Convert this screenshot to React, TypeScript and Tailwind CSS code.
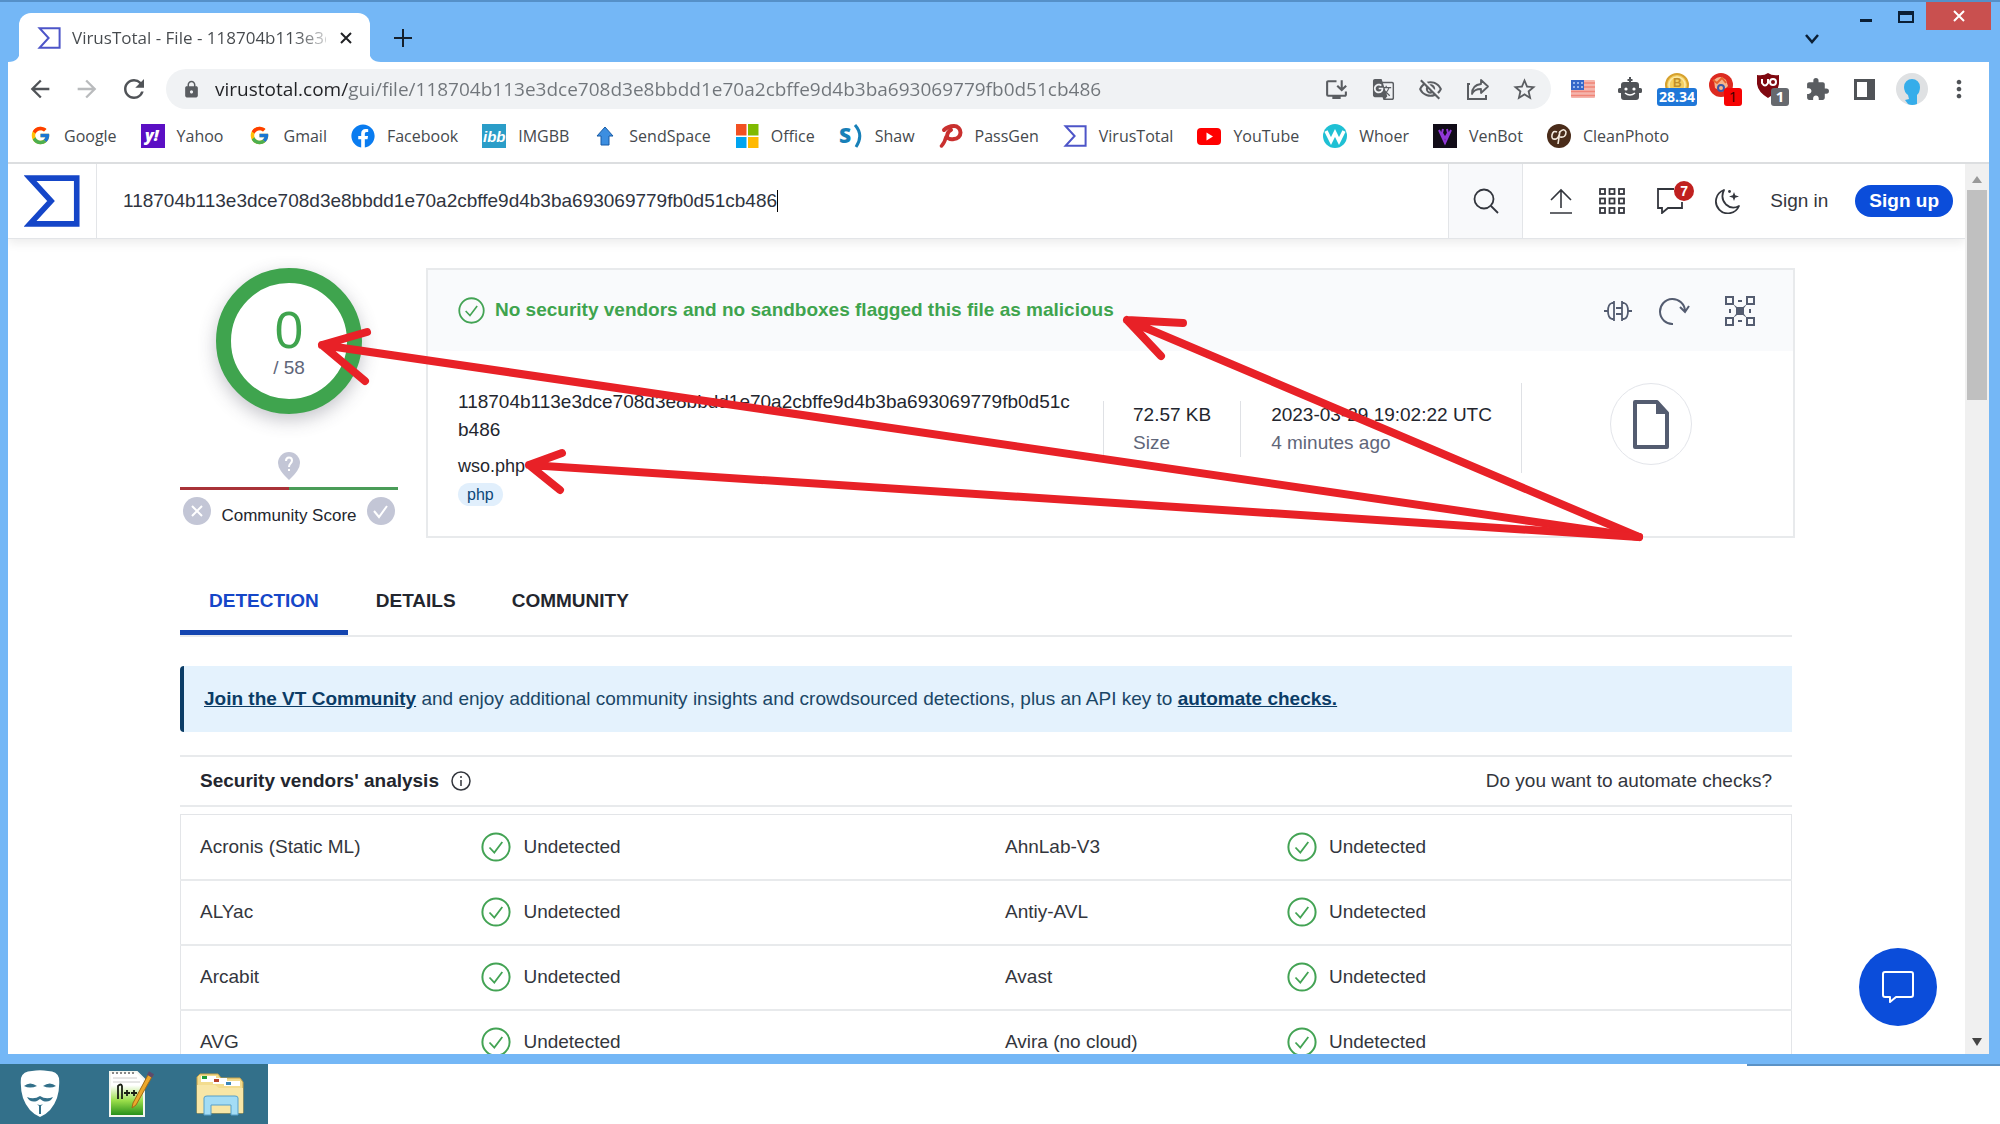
import React from 'react';
import { FcGoogle } from 'react-icons/fc';
import { FaFacebook } from 'react-icons/fa';
import {
  MdArrowBack,
  MdArrowForward,
  MdExtension,
  MdGTranslate,
  MdLock,
  MdMoreVert,
  MdOutlineInstallDesktop,
  MdOutlineVisibilityOff,
  MdRefresh,
  MdStarBorder,
} from 'react-icons/md';

const HASH = '118704b113e3dce708d3e8bbdd1e70a2cbffe9d4b3ba693069779fb0d51cb486';

const vendorRows = [
  ['Acronis (Static ML)', 'AhnLab-V3'],
  ['ALYac', 'Antiy-AVL'],
  ['Arcabit', 'Avast'],
  ['AVG', 'Avira (no cloud)'],
];

const SigmaLogo: React.FC<{ className: string; stroke?: number }> = ({ className, stroke = 2 }) => (
  <svg viewBox="0 0 24 22" className={className} fill="none" stroke="currentColor" strokeWidth={stroke}>
    <path d="M2.6 1.2H22.6V20.8H2.6L11.6 11z" strokeMiterlimit="10" />
  </svg>
);

const CheckCircle: React.FC<{ className: string }> = ({ className }) => (
  <svg viewBox="0 0 30 30" className={className} fill="none" stroke="#43a354" strokeWidth="2">
    <circle cx="15" cy="15" r="13.6" />
    <path d="M8.5 15.5l4.8 5 8-10.5" strokeWidth="1.8" />
  </svg>
);

const bookmarks: { label: string; icon: React.ReactNode }[] = [
  { label: 'Google', icon: <FcGoogle size={21} /> },
  {
    label: 'Yahoo',
    icon: (
      <svg viewBox="0 0 24 24" className="size-6">
        <rect width="24" height="24" fill="#5b0fc4" />
        <text x="4" y="17" fontSize="16" fontWeight="800" fontStyle="italic" fill="#fff" fontFamily="Open Sans, sans-serif">y!</text>
      </svg>
    ),
  },
  { label: 'Gmail', icon: <FcGoogle size={21} /> },
  { label: 'Facebook', icon: <FaFacebook size={24} color="#0a7cf0" /> },
  {
    label: 'IMGBB',
    icon: (
      <svg viewBox="0 0 24 24" className="size-6">
        <rect width="24" height="24" fill="#2a9dc8" />
        <text x="1" y="18" fontSize="15" fontWeight="700" fontStyle="italic" fill="#fff" fontFamily="Liberation Sans, sans-serif">ibb</text>
      </svg>
    ),
  },
  {
    label: 'SendSpace',
    icon: (
      <svg viewBox="0 0 24 24" className="size-6">
        <path d="M12 3l8 9h-4v9H8v-9H4z" fill="#3c8ee0" stroke="#175ba6" />
      </svg>
    ),
  },
  {
    label: 'Office',
    icon: (
      <svg viewBox="0 0 24 24" className="size-6">
        <path d="M1 0h10.500v11.500H1z" fill="#f25022" />
        <path d="M13 0h10.500v11.500H13z" fill="#7fba00" />
        <path d="M1 13h10.500v11H1z" fill="#00a4ef" />
        <path d="M13 13h10.500v11H13z" fill="#ffb900" />
      </svg>
    ),
  },
  {
    label: 'Shaw',
    icon: (
      <svg viewBox="0 0 24 24" className="size-6">
        <text x="0" y="19" fontSize="21" fontWeight="800" fill="#1780b8" fontFamily="Open Sans, sans-serif">S</text>
        <path d="M16 1q9 10 1 22" fill="none" stroke="#1780b8" strokeWidth="3" />
      </svg>
    ),
  },
  {
    label: 'PassGen',
    icon: (
      <svg viewBox="0 0 24 24" className="size-6" fill="none" stroke="#c9302f" strokeLinecap="round">
        <path d="M2.500 22q3-3 4.500-9" strokeWidth="3.500" />
        <path d="M5 6q4-4 10-4a6.500 6.500 0 010 13q-5 1-7-2 0-5 4-7" strokeWidth="4" />
      </svg>
    ),
  },
  { label: 'VirusTotal', icon: <SigmaLogo className="h-6 w-6 text-[#4d55c8]" /> },
  {
    label: 'YouTube',
    icon: (
      <svg viewBox="0 0 24 24" className="size-6">
        <rect x="0" y="4" width="24" height="17" rx="4" fill="#f00" />
        <path d="M9.500 8.500l6.500 4-6.500 4z" fill="#fff" />
      </svg>
    ),
  },
  {
    label: 'Whoer',
    icon: (
      <svg viewBox="0 0 24 24" className="size-6">
        <circle cx="12" cy="12" r="12" fill="#1fc0d4" />
        <path d="M3 7l5 10 4-8 4 8 5-10" fill="none" stroke="#fff" strokeWidth="3.500" />
      </svg>
    ),
  },
  {
    label: 'VenBot',
    icon: (
      <svg viewBox="0 0 24 24" className="size-6">
        <rect width="24" height="24" fill="#110c18" />
        <path d="M6 6l6 13 6-13M10 5l-1 4 3 5 3-5-1-4" fill="none" stroke="#9238d8" strokeWidth="2" />
      </svg>
    ),
  },
  {
    label: 'CleanPhoto',
    icon: (
      <svg viewBox="0 0 24 24" className="size-6">
        <circle cx="12" cy="12" r="12" fill="#4a2c1a" />
        <path d="M10 8q-4-2-5 3t4 4q3-1 4-8l-2 13M12 9q5-6 7-1 0 6-6 5" fill="none" stroke="#f3e8dc" strokeWidth="1.600" />
      </svg>
    ),
  },
];

const extensions: { label: string; icon: React.ReactNode }[] = [
  {
    label: 'Proxy',
    icon: (
      <svg viewBox="0 0 24 18" className="h-[18px] w-6">
        <rect width="24" height="18" rx="1" fill="#f5b5ac" />
        <path d="M12 3h12M12 7h12M0 11.500h24M0 15.500h24" stroke="#f08577" strokeWidth="1.500" />
        <rect width="13" height="10" fill="#3567c9" />
        <path d="M2 3h10M2 7h10" stroke="#b9d0f5" strokeWidth="1.500" strokeDasharray="2 2" />
      </svg>
    ),
  },
  {
    label: 'Robot',
    icon: (
      <svg viewBox="0 0 24 24" className="size-6 text-[#505357]" fill="currentColor">
        <path d="M11 0h2v5h-2z" />
        <path d="M9.500 2h5v2h-5z" />
        <path d="M6 5h12a3 3 0 013 3v3h1.500a1.500 1.500 0 011.500 1.500v2a1.500 1.500 0 01-1.500 1.500H21v4a3 3 0 01-3 3H6a3 3 0 01-3-3v-4H1.500A1.500 1.500 0 010 14.500v-2A1.500 1.500 0 011.500 11H3V8a3 3 0 013-3z" />
        <circle cx="8" cy="12" r="1.600" fill="#fff" />
        <circle cx="16" cy="12" r="1.600" fill="#fff" />
        <path d="M7 16q5 4 10 0" fill="none" stroke="#fff" strokeWidth="1.500" />
      </svg>
    ),
  },
  {
    label: 'Bitcoin price',
    icon: (
      <svg viewBox="0 0 42 34" className="h-[34px] w-[42px]">
        <circle cx="21" cy="13" r="11" fill="#f4cf62" stroke="#d6a12e" strokeWidth="2" />
        <circle cx="21" cy="13" r="8" fill="none" stroke="#fbeaa8" strokeWidth="1.500" />
        <text x="17" y="15" fontSize="12" fontWeight="700" fill="#c08f2a" fontFamily="Liberation Sans, sans-serif">B</text>
        <rect x="1" y="16" width="40" height="18" rx="3" fill="#1f77d8" />
        <text x="21" y="30" fontSize="14" fontWeight="700" textAnchor="middle" fill="#fff" fontFamily="Open Sans, sans-serif">28.34</text>
      </svg>
    ),
  },
  {
    label: 'Cookies',
    icon: (
      <svg viewBox="0 0 36 34" className="h-[34px] w-9">
        <circle cx="15" cy="13" r="12" fill="#dc2a20" />
        <path d="M8 8q6-6 12 0l2 6-6 6-7-4z" fill="#f6b48c" />
        <path d="M7 8l4 3 5-5 4 5" fill="none" stroke="#e8632c" strokeWidth="2" />
        <circle cx="15" cy="16" r="3" fill="none" stroke="#3b57a8" strokeWidth="2" />
        <rect x="18" y="16" width="18" height="18" rx="3" fill="#f60404" />
        <text x="27" y="30" fontSize="15" textAnchor="middle" fill="#3d0000" fontFamily="Open Sans, sans-serif">1</text>
      </svg>
    ),
  },
  {
    label: 'uBlock',
    icon: (
      <svg viewBox="0 0 36 34" className="h-[34px] w-9">
        <path d="M4 3q7 1 11-2 4 3 11 2v9q-1 8-11 14Q5 20 4 12z" fill="#7f0810" />
        <path d="M9 7v4q3 5 6 0V7M17 10a3 3 0 106 0 3 3 0 10-6 0" fill="none" stroke="#fff" strokeWidth="2" />
        <rect x="18" y="16" width="18" height="18" rx="3" fill="#66696e" />
        <text x="27" y="30" fontSize="15" fontWeight="700" textAnchor="middle" fill="#fff" fontFamily="Open Sans, sans-serif">1</text>
      </svg>
    ),
  },
  { label: 'Extensions', icon: <MdExtension size={25} color="#5a5d61" /> },
  {
    label: 'Side panel',
    icon: (
      <svg viewBox="0 0 21 21" className="size-[21px]">
        <rect x="1.500" y="1.500" width="18" height="18" fill="#fff" stroke="#505357" strokeWidth="3" />
        <path d="M13 1h7v19h-7z" fill="#505357" />
      </svg>
    ),
  },
  {
    label: 'Profile',
    icon: (
      <svg viewBox="0 0 32 32" className="size-8">
        <circle cx="16" cy="16" r="16" fill="#dfe1e3" />
        <path d="M8 14a8 8 0 0116 0q0 5-3 8v9q-5 2-9 0l-3-4 4-1-1-4q-4-3-4-8z" fill="#35adea" />
      </svg>
    ),
  },
  { label: 'Menu', icon: <MdMoreVert size={28} color="#505357" /> },
];

const ShareIcon = () => (
  <svg viewBox="0 0 24 24" className="size-6" fill="none" stroke="currentColor" strokeWidth="2">
    <path d="M4 7H2v15h18v-4" />
    <path d="M15 3l7 6.500-7 6.500v-4q-7 0-9 5 0-9 9-10z" strokeLinejoin="round" strokeWidth="1.800" />
  </svg>
);

const TitleBar = () => (
  <div className="flex h-[62px] border-t-2 border-[#5590c8] bg-[#74b7f6] pl-[19px]">
    <div className="relative mt-[11px] flex w-[351px] items-center rounded-t-xl bg-white pl-[18px] pr-3">
      <svg viewBox="0 0 12 12" className="absolute -left-[11px] bottom-0 size-3"><path d="M12 0v12H0Q12 12 12 0z" fill="#fff" /></svg>
      <svg viewBox="0 0 12 12" className="absolute -right-[11px] bottom-0 size-3"><path d="M0 0v12h12Q0 12 0 0z" fill="#fff" /></svg>
      <SigmaLogo className="h-6 w-6 shrink-0 text-[#4d55c8]" />
      <span className="ml-[11px] flex-1 overflow-hidden whitespace-nowrap bg-[linear-gradient(to_right,#45494d_88%,#ffffff_104%)] bg-clip-text text-[17px] text-transparent">
        VirusTotal - File - 118704b113e3dc
      </span>
      <button aria-label="Close tab" className="ml-2 grid size-6 place-items-center text-[#202124]">
        <svg viewBox="0 0 12 12" className="size-3" stroke="currentColor" strokeWidth="2"><path d="M1 1l10 10M11 1L1 11" /></svg>
      </button>
    </div>
    <button aria-label="New tab" className="ml-6 mt-[27px] size-[18px] text-[#15202c]">
      <svg viewBox="0 0 18 18" className="size-[18px]" stroke="currentColor" strokeWidth="2"><path d="M9 0v18M0 9h18" /></svg>
    </button>
    <button aria-label="Search tabs" className="ml-auto mr-10 mt-[28px] size-4 text-[#0b1f35]">
      <svg viewBox="0 0 16 16" className="size-4" fill="none" stroke="currentColor" strokeWidth="2.500"><path d="M2 5l6 7 6-7" /></svg>
    </button>
    <button aria-label="Minimize" className="mt-[17px] h-[3px] w-3 bg-[#0b1f35]" />
    <button aria-label="Maximize" className="ml-[26px] mt-[9px] h-3 w-4 border-2 border-t-4 border-[#0b1f35]" />
    <button aria-label="Close" className="ml-3 mr-[9px] grid h-7 w-[65px] place-items-center bg-[#c9504f] text-white">
      <svg viewBox="0 0 12 12" className="size-3" stroke="currentColor" strokeWidth="2"><path d="M1 1l10 10M11 1L1 11" /></svg>
    </button>
  </div>
);

const Toolbar = () => (
  <div className="flex items-center pl-2 pr-[7px] pt-[7px]">
    {[
      { label: 'Back', icon: <MdArrowBack size={28} />, color: 'text-[#505357]' },
      { label: 'Forward', icon: <MdArrowForward size={28} />, color: 'text-[#b9bbbd]' },
      { label: 'Reload', icon: <MdRefresh size={30} />, color: 'text-[#505357]' },
    ].map(b => (
      <button key={b.label} aria-label={b.label} className={`grid w-[47px] place-items-center ${b.color}`}>{b.icon}</button>
    ))}
    <div className="ml-[9px] flex h-10 flex-1 items-center rounded-full bg-[#f0f2f4] pl-4 pr-[3px] text-[#5a5d61]">
      <MdLock size={19} />
      <input
        aria-label="Address"
        defaultValue={`virustotal.com/gui/file/${HASH}`}
        className="ml-[14px] min-w-0 flex-1 bg-[linear-gradient(to_right,#202124_133px,#70757a_133px)] bg-clip-text text-[19px] text-transparent outline-none"
      />
      {[
        { label: 'Install', icon: <MdOutlineInstallDesktop size={25} /> },
        { label: 'Translate', icon: <MdGTranslate size={23} /> },
        { label: 'Cookies blocked', icon: <MdOutlineVisibilityOff size={25} /> },
        { label: 'Share', icon: <ShareIcon /> },
        { label: 'Bookmark', icon: <MdStarBorder size={27} /> },
      ].map(b => (
        <button key={b.label} aria-label={b.label} className="grid w-[47px] place-items-center">{b.icon}</button>
      ))}
    </div>
    <div className="ml-2 flex">
      {extensions.map(e => (
        <button key={e.label} aria-label={e.label} className="grid h-10 w-[47px] place-items-center">{e.icon}</button>
      ))}
    </div>
  </div>
);

const BookmarksBar = () => (
  <nav className="flex h-[55px] items-center gap-6 border-b-2 border-[#dcdee0] pl-5 text-[16px] text-[#45494d]">
    {bookmarks.map(b => (
      <a key={b.label} href="#" className="flex items-center gap-3 whitespace-nowrap">
        <span className="grid size-6 place-items-center">{b.icon}</span>
        {b.label}
      </a>
    ))}
  </nav>
);

const SiteHeader = () => (
  <header className="relative z-10 flex h-[75px] items-stretch border-b border-[#e3e5e8] bg-white shadow-[0_4px_10px_rgba(0,0,0,0.08)]">
    <a href="#" aria-label="Home" className="flex w-[89px] items-center border-r border-[#e3e5e8] pl-4 text-[#1546c8]">
      <SigmaLogo className="h-[52px] w-[56px]" stroke={2.400} />
    </a>
    <div className="flex flex-1 items-center pl-[26px]">
      <input
        aria-label="Search"
        defaultValue={HASH}
        className="text-[19px] text-[#2f3440] outline-none [field-sizing:content]"
      />
      <span className="h-[22px] w-px bg-black" />
    </div>
    <button aria-label="Run search" className="grid w-[75px] place-items-center border-x border-[#e3e5e8] bg-[#f8f9fb] text-[#33363d]">
      <svg viewBox="0 0 26 26" className="size-[26px]" fill="none" stroke="currentColor" strokeWidth="1.800">
        <circle cx="11" cy="11" r="9.500" />
        <path d="M18 18l7 7" />
      </svg>
    </button>
    <div className="flex items-center pl-[26px] pr-3 text-[#33363d]">
      <button aria-label="Upload">
        <svg viewBox="0 0 24 26" className="h-[26px] w-6" fill="none" stroke="currentColor" strokeWidth="1.600">
          <path d="M12 20V2M2 12L12 2l10 10M1 25h22" />
        </svg>
      </button>
      <button aria-label="Apps" className="ml-[26px]">
        <svg viewBox="0 0 26 26" className="size-[26px]" fill="none" stroke="currentColor" strokeWidth="1.800">
          {[1, 10.500, 20].map(y => [1, 10.500, 20].map(x => <rect key={`${x}-${y}`} x={x} y={y} width="5" height="5" />))}
        </svg>
      </button>
      <button aria-label="Notifications" className="relative ml-[32px]">
        <svg viewBox="0 0 26 26" className="size-[26px]" fill="none" stroke="currentColor" strokeWidth="1.800">
          <path d="M17 1H1v19h4v5l6-5h14v-6" />
        </svg>
        <span className="absolute -top-[7px] left-[17px] grid size-5 place-items-center rounded-full bg-[#c0201f] text-[14px] font-bold leading-none text-white">7</span>
      </button>
      <button aria-label="Theme" className="ml-[31px]">
        <svg viewBox="0 0 26 26" className="size-[26px]" fill="none" stroke="currentColor" strokeWidth="1.800" strokeLinejoin="round">
          <path d="M10 2A12 12 0 1025 18Q18 22 12 16.500 6 10 10 2z" />
          <path d="M20 4l1.200 3.300L25 8.500l-3.800 1.200L20 13l-1.200-3.300L15 8.500l3.800-1.200z" fill="currentColor" stroke="none" />
          <circle cx="15.500" cy="3.500" r="1.400" fill="currentColor" stroke="none" />
        </svg>
      </button>
      <a href="#" className="ml-[30px] text-[19px]">Sign in</a>
      <a href="#" className="ml-[27px] rounded-full bg-[#0b4dda] px-[14px] py-[2px] text-[19px] font-bold text-white">Sign up</a>
    </div>
  </header>
);

const ScorePanel = () => (
  <div className="flex w-[218px] shrink-0 flex-col items-center">
    <div className="flex size-[146px] flex-col items-center justify-center rounded-full border-[15px] border-[#3fa44e] bg-white pt-1 shadow-[0_6px_18px_rgba(60,60,80,0.3)]">
      <span className="text-[51px] leading-[50px] text-[#3fa44e]">0</span>
      <span className="text-[19px] leading-6 text-[#5f6679]">/ 58</span>
    </div>
    <svg viewBox="0 0 22 28" className="mt-[38px] h-7 w-[22px]">
      <path d="M11 28Q0 18 0 11a11 11 0 0122 0q0 7-11 17z" fill="#c3c6d6" />
      <path d="M8 9q0-3.500 3-3.500t3 3q0 1.500-1.500 3T11 15M11 17v2" fill="none" stroke="#fff" strokeWidth="2" />
    </svg>
    <div className="mt-[7px] flex h-[3px] w-full">
      <div className="flex-1 bg-[#a83238]" />
      <div className="flex-1 bg-[#4a9c58]" />
    </div>
    <div className="mt-[7px] flex w-full items-start justify-between px-[3px]">
      <button aria-label="Harmful">
        <svg viewBox="0 0 28 28" className="size-7">
          <circle cx="14" cy="14" r="14" fill="#c3c6d6" />
          <path d="M9 9l10 10M19 9L9 19" stroke="#fff" strokeWidth="2" />
        </svg>
      </button>
      <span className="mt-[7px] text-[17px] leading-6 text-[#23262e]">Community Score</span>
      <button aria-label="Harmless">
        <svg viewBox="0 0 28 28" className="size-7">
          <circle cx="14" cy="14" r="14" fill="#c3c6d6" />
          <path d="M7 14l5 6 8-11" fill="none" stroke="#fff" strokeWidth="2" />
        </svg>
      </button>
    </div>
  </div>
);

const FileCard = () => (
  <div className="flex-1 border-2 border-[#e8eaec]">
    <div className="flex h-[81px] items-center bg-[#f9fafc] pl-[30px] pr-[38px] text-[#545c70]">
      <CheckCircle className="size-[27px]" />
      <h1 className="ml-[10px] text-[19px] font-bold text-[#3fa44e]">
        No security vendors and no sandboxes flagged this file as malicious
      </h1>
      <button aria-label="Similar files" className="ml-auto">
        <svg viewBox="0 0 30 24" className="h-6 w-[30px]" fill="none" stroke="currentColor" strokeWidth="1.800">
          <path d="M1 12h4M11 2v20M11 4H9q-4 1-4 8t4 8h2M19 2v20M19 4h2q4 1 4 8t-4 8h-2M25 12h4M13 9h6M13 15h6" />
        </svg>
      </button>
      <button aria-label="Reanalyze" className="ml-[26px]">
        <svg viewBox="0 0 32 28" className="h-7 w-8" fill="none" stroke="currentColor" strokeWidth="2">
          <path d="M14 27A12.500 12.500 0 1126 14M21 10l5 5 4-6" />
        </svg>
      </button>
      <button aria-label="Graph" className="ml-[34px]">
        <svg viewBox="0 0 30 30" className="size-[30px]" fill="none" stroke="currentColor" strokeWidth="2">
          <rect x="1" y="1" width="7" height="7" />
          <rect x="22" y="1" width="7" height="7" />
          <rect x="1" y="22" width="7" height="7" />
          <rect x="22" y="22" width="7" height="7" />
          <path d="M13 5h4M13 25h4M5 13v4M25 13v4" />
          <path d="M8 8l4 3h6l4-3-3 4v6l3 4-4-3h-6l-4 3 3-4v-6z" fill="currentColor" stroke="none" />
        </svg>
      </button>
    </div>
    <div className="flex h-[185px] items-start pl-[30px] pr-[101px] pt-8 text-[19px] leading-7 text-[#23262e]">
      <div className="w-[620px] pt-[5px]">
        <p className="break-all">{HASH}</p>
        <p className="mt-2 text-[18px] leading-7">wso.php</p>
        <a href="#" className="inline-block rounded-full bg-[#e1effc] px-[9px] text-[16px] leading-[23px] text-[#0b4779]">php</a>
      </div>
      <div className="ml-[25px] mt-[18px] border-l border-[#dfe1e5] pl-[29px]">
        <p>72.57 KB</p>
        <p className="text-[#5f6679]">Size</p>
      </div>
      <div className="ml-[29px] mt-[18px] border-l border-[#dfe1e5] pl-[30px]">
        <p>2023-03-29 19:02:22 UTC</p>
        <p className="text-[#5f6679]">4 minutes ago</p>
      </div>
      <div className="ml-[29px] h-[90px] w-px bg-[#dfe1e5]" />
      <div className="ml-auto grid size-[82px] place-items-center rounded-full border border-[#e3e5ea]">
        <svg viewBox="0 0 36 49" className="h-[49px] w-9">
          <path d="M2 2h22l10 11v34H2z" fill="#fff" stroke="#545c70" strokeWidth="4" strokeLinejoin="round" />
          <path d="M23 2l11 12H23z" fill="#545c70" />
        </svg>
      </div>
    </div>
  </div>
);

const VendorTable = () => (
  <table className="mt-[7px] w-full table-fixed border border-[#e3e5e8] text-[19px] text-[#33363d]">
    <tbody>
      {vendorRows.map(row => (
        <tr key={row[0]} className="h-[65px] border-b-2 border-[#e8eaec]">
          {row.map(name => (
            <React.Fragment key={name}>
              <td className="w-[17.5%] whitespace-nowrap pl-[19px]">{name}</td>
              <td className="w-[32.5%] pl-[19px]">
                <span className="flex items-center gap-3">
                  <CheckCircle className="size-[30px]" />
                  Undetected
                </span>
              </td>
            </React.Fragment>
          ))}
        </tr>
      ))}
    </tbody>
  </table>
);

// Hand drawn arrows that start from one point below the file icon
const Arrows = () => (
  <svg
    viewBox="0 1 1957 890"
    className="pointer-events-none absolute left-0 top-0 h-[890px] w-[1957px]"
    fill="none"
    stroke="#e82127"
    strokeWidth="8"
    strokeLinecap="round"
    strokeLinejoin="round"
  >
    <path d="M1631 374L1119 157M1175 160L1119 157L1153 193" />
    <path d="M1631 374L314 182M359 169L314 182L357 218" />
    <path d="M1631 374L521 302M554 290L521 302L552 327" />
  </svg>
);

const Taskbar = () => (
  <footer className="flex h-[60px] justify-between">
    <div className="flex w-[268px] items-center bg-[#33708a] pl-5">
      <button aria-label="Mask">
        <svg viewBox="0 0 40 48" className="h-12 w-10">
          <path d="M1 8Q3 1 12 1q8-1.500 16 0 9 0 11 7 1 10-2 20-5 14-17 19Q8 42 3 28 0 18 1 8z" fill="#fff" />
          <path d="M4 16q6-5 13 0-7 3-13 0zM23 16q7-5 13 0-6 3-13 0zM7 27q7 3 13-1 6 4 13 1-3 6-10 4l-3-2-3 2q-7 2-10-4zM17 34q3 2 6 0l-2 2v8h-2v-8z" fill="#33708a" />
        </svg>
      </button>
      <button aria-label="Notepad++" className="ml-[49px]">
        <svg viewBox="0 0 46 48" className="h-12 w-[46px]">
          <defs>
            <linearGradient id="note" x1="0" y1="0" x2="0" y2="1">
              <stop offset="0.3" stopColor="#fff" />
              <stop offset="0.65" stopColor="#9ade4a" />
              <stop offset="1" stopColor="#1f8a17" />
            </linearGradient>
          </defs>
          <path d="M1 2h27l7 7v37H1z" fill="url(#note)" stroke="#f4f6f0" strokeWidth="2" />
          <path d="M3 3h22" stroke="#888" strokeWidth="2" strokeDasharray="2 2" />
          <path d="M4 8h24M4 12h27" stroke="#ccc" />
          <path d="M9 29V16q3-3 4 0v13M15 23h6M18 20v6M22 23h6M25 20v6" fill="none" stroke="#1a1f14" strokeWidth="1.800" />
          <path d="M40 3l4 2-17 30-4 3 1-5z" fill="#eca82c" stroke="#a56a14" />
          <path d="M39 3l5 3" stroke="#5d4a6b" strokeWidth="4" />
        </svg>
      </button>
      <button aria-label="Files" className="ml-10">
        <svg viewBox="0 0 50 44" className="h-11 w-[50px]">
          <path d="M2 5l3-3h18l3 4h19l3 4v31H2z" fill="#f3dc8e" stroke="#c8a248" />
          <path d="M6 4h15v6H6zM18 6h14v6H18zM29 9h16v5H29z" fill="#fff" />
          <path d="M7 4h5v3H7z" fill="#1f9c3a" />
          <path d="M19 7h5v3h-5z" fill="#b8432c" />
          <path d="M31 10h5v3h-5z" fill="#3a86b8" />
          <path d="M2 13h18l4 3h24v25H2z" fill="#f8e6a6" />
          <path d="M9 43V26q0-2 3-2h28q3 0 3 2v17h-7V33H16v10z" fill="#a3dcf5" stroke="#579fc9" />
        </svg>
      </button>
    </div>
    <div className="w-[253px] border-t-2 border-[#5b92c6]" />
  </footer>
);

export default function App() {
  return (
    <div className="flex h-screen flex-col overflow-hidden bg-white font-['Open_Sans',sans-serif]">
      <TitleBar />
      <div className="flex min-h-0 flex-1 flex-col border-b-[10px] border-l-8 border-r-[11px] border-[#74b7f6] bg-white">
        <Toolbar />
        <BookmarksBar />
        <div className="flex min-h-0 flex-1 font-['Liberation_Sans',Arial,sans-serif]">
          <div className="relative flex-1 overflow-hidden">
            <SiteHeader />
            <main className="pl-[172px] pr-[170px] pt-[29px]">
              <section className="flex gap-7">
                <ScorePanel />
                <FileCard />
              </section>
              <section className="mr-[3px]">
                <div role="tablist" className="mt-[34px] flex border-b-2 border-[#e8eaec] text-[19px] font-semibold">
                  <button role="tab" aria-selected="true" className="h-[63px] border-b-[5px] border-[#1445b0] px-[29px] text-[#1546c8]">DETECTION</button>
                  <button role="tab" className="px-7 pb-[5px] text-[#23262e]">DETAILS</button>
                  <button role="tab" className="px-7 pb-[5px] text-[#23262e]">COMMUNITY</button>
                </div>
                <p className="mt-[29px] rounded-l border-l-4 border-[#0b3c66] bg-[#e4f2fd] py-5 pl-5 text-[19px] leading-[26px] text-[#1a4666]">
                  <a href="#" className="font-bold text-[#0b3c66] underline">Join the VT Community</a> and enjoy additional community insights and crowdsourced detections, plus an API key to{' '}
                  <a href="#" className="font-bold text-[#0b3c66] underline">automate checks.</a>
                </p>
                <div className="mt-[23px] flex h-[52px] items-center border-y-2 border-[#e8eaec] px-5 text-[19px] text-[#33363d]">
                  <h2 className="font-bold text-[#23262e]">Security vendors&#39; analysis</h2>
                  <svg viewBox="0 0 20 20" className="ml-3 size-5" fill="none" stroke="currentColor" strokeWidth="1.500">
                    <circle cx="10" cy="10" r="9" />
                    <path d="M10 9v6M10 5v2" />
                  </svg>
                  <a href="#" className="ml-auto">Do you want to automate checks?</a>
                </div>
                <VendorTable />
              </section>
            </main>
            <Arrows />
            <button aria-label="Chat" className="absolute bottom-7 right-7 grid size-[78px] place-items-center rounded-full bg-[#0b4dda]">
              <svg viewBox="0 0 32 32" className="size-8" fill="none" stroke="#fff" strokeWidth="2" strokeLinejoin="round">
                <path d="M3 1h26q2 0 2 2v21q0 2-2 2H14l-6 5v-5H3q-2 0-2-2V3q0-2 2-2z" />
              </svg>
            </button>
          </div>
          <div className="flex w-6 flex-col items-center justify-between bg-[#f0f0f0] pb-2 pt-3">
            <div className="flex flex-col items-center gap-[7px]">
              <svg viewBox="0 0 10 7" className="h-[7px] w-[10px]"><path d="M0 7h10L5 0z" fill="#999" /></svg>
              <div className="h-[210px] w-5 bg-[#c0c0c0]" />
            </div>
            <svg viewBox="0 0 10 8" className="h-2 w-[10px]"><path d="M0 0h10L5 8z" fill="#444" /></svg>
          </div>
        </div>
      </div>
      <Taskbar />
    </div>
  );
}
